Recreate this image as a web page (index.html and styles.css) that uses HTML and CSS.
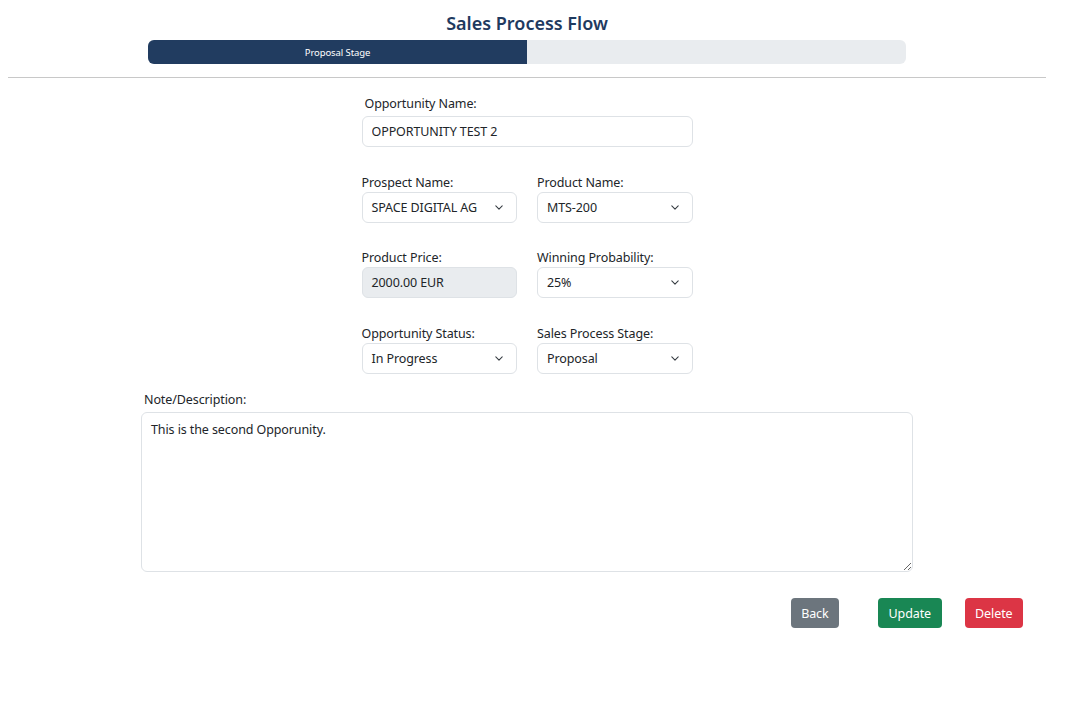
FILE: index.html
```html
<!DOCTYPE html>
<html lang="en">
<head>
<meta charset="utf-8">
<title>Sales Process Flow</title>
<link rel="stylesheet" href="styles.css">
</head>
<body>
<div class="page">
  <header class="header">
    <h1 class="title">Sales Process Flow</h1>
    <div class="progress">
      <div class="progress-fill" style="width: 50%">Proposal Stage</div>
    </div>
  </header>
  <hr class="divider">
  <form class="form">
    <div class="field field-wide">
      <label class="label label-indent">Opportunity Name:</label>
      <input class="control" type="text" value="OPPORTUNITY TEST 2">
    </div>
    <div class="row">
      <div class="field">
        <label class="label">Prospect Name:</label>
        <div class="control select">SPACE DIGITAL AG<svg class="chev" viewBox="0 0 10 6" width="8" height="5"><path d="M1 1l4 4 4-4" fill="none" stroke="#343a40" stroke-width="1.3" stroke-linecap="round" stroke-linejoin="round"/></svg></div>
      </div>
      <div class="field">
        <label class="label">Product Name:</label>
        <div class="control select">MTS-200<svg class="chev" viewBox="0 0 10 6" width="8" height="5"><path d="M1 1l4 4 4-4" fill="none" stroke="#343a40" stroke-width="1.3" stroke-linecap="round" stroke-linejoin="round"/></svg></div>
      </div>
    </div>
    <div class="row">
      <div class="field">
        <label class="label">Product Price:</label>
        <div class="control disabled">2000.00 EUR</div>
      </div>
      <div class="field">
        <label class="label">Winning Probability:</label>
        <div class="control select">25%<svg class="chev" viewBox="0 0 10 6" width="8" height="5"><path d="M1 1l4 4 4-4" fill="none" stroke="#343a40" stroke-width="1.3" stroke-linecap="round" stroke-linejoin="round"/></svg></div>
      </div>
    </div>
    <div class="row">
      <div class="field">
        <label class="label">Opportunity Status:</label>
        <div class="control select">In Progress<svg class="chev" viewBox="0 0 10 6" width="8" height="5"><path d="M1 1l4 4 4-4" fill="none" stroke="#343a40" stroke-width="1.3" stroke-linecap="round" stroke-linejoin="round"/></svg></div>
      </div>
      <div class="field">
        <label class="label">Sales Process Stage:</label>
        <div class="control select">Proposal<svg class="chev" viewBox="0 0 10 6" width="8" height="5"><path d="M1 1l4 4 4-4" fill="none" stroke="#343a40" stroke-width="1.3" stroke-linecap="round" stroke-linejoin="round"/></svg></div>
      </div>
    </div>
  </form>
  <div class="notes">
    <label class="label label-indent">Note/Description:</label>
    <textarea class="textarea">This is the second Opporunity.</textarea>
  </div>
  <div class="actions">
    <button class="btn btn-back" type="button">Back</button>
    <button class="btn btn-update" type="button">Update</button>
    <button class="btn btn-delete" type="button">Delete</button>
  </div>
</div>
</body>
</html>
```

FILE: styles.css
```css
* { box-sizing: border-box; }

body {
  margin: 8px;
  background: #ffffff;
  font-family: "Noto Sans", "Open Sans", sans-serif;
  color: #212529;
}

.page {
  width: 1038px;
}

.header {
  display: flex;
  flex-direction: column;
  align-items: center;
  padding-top: 3px;
}

.title {
  margin: 0;
  font-size: 18px;
  line-height: 25px;
  font-weight: 600;
  color: #1f3a5f;
}

.progress {
  margin-top: 4px;
  width: 758px;
  height: 24px;
  background: #e9ecef;
  border-radius: 6px;
  overflow: hidden;
  display: flex;
}

.progress-fill {
  background: #213c60;
  color: #ffffff;
  font-size: 9.5px;
  letter-spacing: -0.1px;
  display: flex;
  align-items: center;
  justify-content: center;
}

.divider {
  margin: 13px 0 0;
  border: 0;
  border-top: 1px solid #c8c8c8;
  height: 0;
}

.form {
  width: 331px;
  margin: 0 auto;
  padding-top: 17px;
  display: flex;
  flex-direction: column;
  gap: 26.5px;
}

.field {
  display: flex;
  flex-direction: column;
  flex: 1;
  min-width: 0;
}

.row {
  display: flex;
  gap: 20px;
}

.label {
  font-size: 12.5px;
  line-height: 18px;
  letter-spacing: -0.1px;
  color: #212529;
}

.label-indent {
  padding-left: 3px;
}

.field-wide .label {
  margin-bottom: 3px;
}

.control {
  height: 31px;
  border: 1px solid #dee2e6;
  border-radius: 6px;
  padding: 0 9px;
  font-family: inherit;
  font-size: 12.5px;
  letter-spacing: -0.1px;
  color: #212529;
  background: #ffffff;
  display: flex;
  align-items: center;
  width: 100%;
}

.select {
  justify-content: space-between;
  padding-right: 13px;
}

.chev {
  display: block;
}

.disabled {
  background: #e9ecef;
}

.notes {
  width: 772px;
  margin: 17.5px auto 0;
  display: flex;
  flex-direction: column;
}

.notes .label {
  margin-bottom: 3px;
}

.textarea {
  width: 772px;
  height: 160px;
  border: 1px solid #dee2e6;
  border-radius: 6px;
  padding: 7px 9px;
  font-family: inherit;
  font-size: 12.5px;
  letter-spacing: -0.1px;
  line-height: 19px;
  color: #212529;
  resize: vertical;
}

.actions {
  display: flex;
  justify-content: flex-end;
  margin-top: 26px;
  padding-right: 23px;
}

.btn {
  height: 30px;
  border: 0;
  border-radius: 4px;
  padding: 0 10.5px;
  font-family: inherit;
  font-size: 12.5px;
  letter-spacing: -0.1px;
  color: #ffffff;
  cursor: pointer;
}

.btn-back { background: #6c757d; margin-right: 39px; }
.btn-update { background: #198754; margin-right: 23px; }
.btn-delete { background: #dc3545; }
```
